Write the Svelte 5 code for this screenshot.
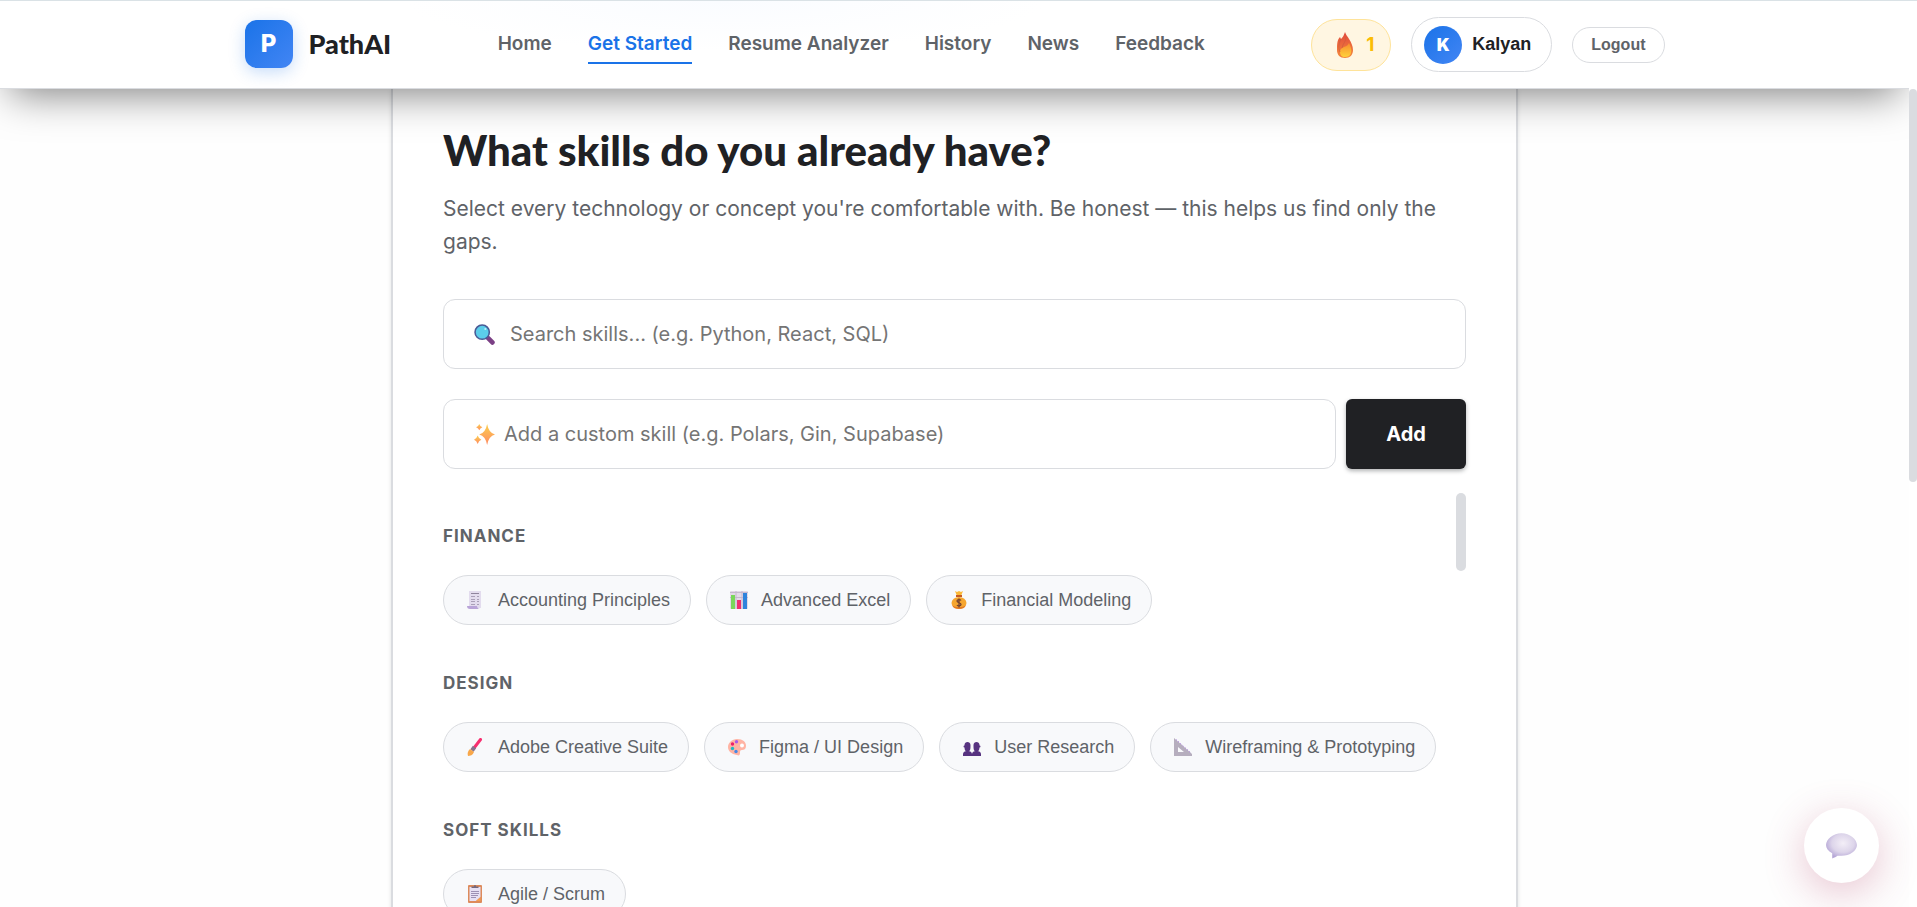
<script>
  let search = "";
  let custom = "";

  const links = [
    { name: "Home", url: "#home" },
    { name: "Get Started", url: "#start", active: true },
    { name: "Resume Analyzer", url: "#resume" },
    { name: "History", url: "#history" },
    { name: "News", url: "#news" },
    { name: "Feedback", url: "#feedback" },
  ];

  const groups = [
    {
      title: "Finance",
      skills: [
        { name: "Accounting Principles", icon: "receipt" },
        { name: "Advanced Excel", icon: "chart" },
        { name: "Financial Modeling", icon: "money" },
      ],
    },
    {
      title: "Design",
      skills: [
        { name: "Adobe Creative Suite", icon: "brush" },
        { name: "Figma / UI Design", icon: "palette" },
        { name: "User Research", icon: "users" },
        { name: "Wireframing & Prototyping", icon: "ruler" },
      ],
    },
    {
      title: "Soft Skills",
      skills: [{ name: "Agile / Scrum", icon: "clipboard" }],
    },
  ];
</script>

<div class="page">
  <div class="view">
    <header>
      <div class="bar">
        <a class="brand" href="#home">
          <span class="logo">P</span>
          <span class="name">PathAI</span>
        </a>
        <nav>
          {#each links as link}
            <a href={link.url} class:active={link.active}>{link.name}</a>
          {/each}
        </nav>
        <div class="account">
          <div class="streak">
            <svg class="flame" viewBox="0 0 18 28" aria-hidden="true">
              <defs>
                <linearGradient id="fl" x1="0" y1="0" x2="0" y2="1">
                  <stop offset="0" stop-color="#e0483c" />
                  <stop offset="1" stop-color="#f58a3c" />
                </linearGradient>
                <linearGradient id="fi" x1="0" y1="0" x2="0" y2="1">
                  <stop offset="0" stop-color="#f78b2e" />
                  <stop offset="1" stop-color="#ffd23b" />
                </linearGradient>
              </defs>
              <path
                fill="url(#fl)"
                d="M9 1c1 4 8 10 8 18 0 5-3 8-8 8s-8-3-8-8C1 14 1 9 4 6l1 2C7 6 8 4 9 1z"
              />
              <path
                fill="url(#fi)"
                d="M13 12c2 4 3 7 2 10-1 3-3 4-6 4s-5-2-5-5 2-4 4-5c3-1 4-2 5-4z"
              />
              <path fill="none" stroke="#c95a3c" stroke-opacity=".6" d="M5 8c-2 4-3 8-1 13M10 6c0 5-3 6-4 11" />
            </svg>
            <span>1</span>
          </div>
          <button class="user">
            <span class="avatar">K</span>
            Kalyan
          </button>
          <button class="logout">Logout</button>
        </div>
      </div>
    </header>

    <main>
      <section class="card">
        <h1>What skills do you already have?</h1>
        <p>
          Select every technology or concept you're comfortable with. Be honest — this helps us find
          only the gaps.
        </p>

        <label class="field">
          <svg class="glyph" viewBox="0 0 20 20" aria-hidden="true">
            <path stroke="#7b4085" stroke-width="4.500" stroke-linecap="round" d="M13.500 13.500l4 4" />
            <circle cx="7.800" cy="7.800" r="6.800" fill="#5bcdea" stroke="#4a5a96" stroke-width="1.500" />
            <circle cx="10.800" cy="4.800" r="1" fill="#c2f0fa" />
          </svg>
          <input
            type="text"
            aria-label="Search skills"
            placeholder="Search skills... (e.g. Python, React, SQL)"
            bind:value={search}
          />
        </label>

        <div class="custom">
          <label class="field tight">
            <svg class="glyph" viewBox="0 0 20 20" aria-hidden="true">
              <defs>
                <linearGradient id="sp" x1="0" y1="0" x2="0" y2="1">
                  <stop offset="0" stop-color="#fbd04e" />
                  <stop offset="1" stop-color="#ff8a62" />
                </linearGradient>
              </defs>
              <g fill="url(#sp)">
                <path d="M12.500 0Q14 8.500 20 10q-6 1.500-7.500 10Q11 11.500 5 10q6-1.500 7.500-10z" />
                <path d="M5 0Q5.700 2.300 8 3 5.700 3.700 5 6 4.300 3.700 2 3 4.300 2.300 5 0z" />
                <path d="M3.500 11q1 3 3.500 4-2.500 1-3.500 4-1-3-3.500-4 2.500-1 3.500-4z" />
              </g>
            </svg>
            <input
              type="text"
              aria-label="Custom skill"
              placeholder="Add a custom skill (e.g. Polars, Gin, Supabase)"
              bind:value={custom}
            />
          </label>
          <button class="add">Add</button>
        </div>

        <div class="skills">
          <div class="groups">
            {#each groups as group}
              <h2>{group.title}</h2>
              <div class="chips">
                {#each group.skills as skill}
                  <button class="chip">
                    <svg viewBox="0 0 18 18" aria-hidden="true">
                      {#if skill.icon === "receipt"}
                        <path fill="#e3dcee" d="M2 0h12v17H2z" />
                        <path fill="#b9a4d8" d="M0 15h10c0 1.500 1 3 3 3H3c-2 0-3-1-3-3z" />
                        <path fill="none" stroke="#8f849c" d="M4 2.500h8" />
                        <path
                          fill="none"
                          stroke="#aaa0b8"
                          d="M4 5.500h4m2 0h2M4 8.500h4m2 0h2M4 10.500h4m2 0h2M4 13.500h4m2 0h2"
                        />
                      {:else if skill.icon === "chart"}
                        <rect width="18" height="18" rx="1" fill="#e3dae8" />
                        <path fill="none" stroke="#c5b8ce" d="M0 1.500h18M0 6.500h18M6 0v18M12 0v18" />
                        <path fill="#79d65b" d="M1 4h4v14H1z" />
                        <path fill="#ef2e70" d="M7 9h4v9H7z" />
                        <path fill="#2f83dc" d="M13 2h4v16h-4z" />
                      {:else if skill.icon === "money"}
                        <path fill="#fbb938" d="M5 0l2 1 2-1 2 1 2-1-2 5H7z" />
                        <path fill="#c55b25" d="M6 4h6v2H6z" />
                        <ellipse cx="9" cy="12" rx="7.500" ry="6" fill="#f6a62f" />
                        <path fill="#e47a22" d="M2 14c3 3 11 3 14 0-1 3-4 4-7 4s-6-1-7-4z" />
                        <path
                          fill="none"
                          stroke="#74412f"
                          stroke-width="1.300"
                          d="M11 9.500C10 8 7 8.500 7 10c0 2 4 1.500 4 3.500 0 1.500-3 2-4 .5M9 7.500v9"
                        />
                      {:else if skill.icon === "brush"}
                        <path stroke="#f82f70" stroke-width="3" stroke-linecap="round" d="M13.500 1.500L7 10" />
                        <path stroke="#85738e" stroke-width="4" d="M7.500 9L5 12.500" />
                        <path fill="#f8a74a" d="M3 11l4 3c-1 3-4 4-6 4-1-3 0-5 2-7z" />
                      {:else if skill.icon === "palette"}
                        <path
                          fill="#ffb4a4"
                          d="M9 1c6 0 9 3 9 7 0 3-2 4-4 4s-2 1-2 3-1 3-3 2c-6-1-9-4-9-8s4-8 9-8z"
                        />
                        <circle cx="14" cy="7.500" r="2" fill="#fff" />
                        <circle cx="8.500" cy="3.800" r="1.700" fill="#a95be8" />
                        <circle cx="4.500" cy="6" r="1.700" fill="#ec1f69" />
                        <circle cx="4.500" cy="10.500" r="1.700" fill="#20b8c4" />
                        <circle cx="8" cy="13.500" r="1.700" fill="#4689e6" />
                      {:else if skill.icon === "users"}
                        <g fill="#573380">
                          <path d="M0 18v-2c0-2 2-3 4-3h1c2 0 4 1 4 3v2zM9 18v-2c0-2 2-3 4-3h1c2 0 4 1 4 3v2z" />
                          <path d="M1.500 7c0-4 6-4 6 0s0 6-3 7c-3-1-3-3-3-7zM10.500 7c0-4 6-4 6 0s0 6-3 7c-3-1-3-3-3-7z" />
                          <circle cx="1.500" cy="8.500" r="1" />
                          <circle cx="16.500" cy="8.500" r="1" />
                        </g>
                      {:else if skill.icon === "ruler"}
                        <path fill="#b6aebe" fill-rule="evenodd" d="M0 0l18 16v2H0zM4 9v5h6z" />
                        <path stroke="#9d67dc" stroke-dasharray="1 2" d="M2 1.500L17 15" />
                      {:else}
                        <rect x="1" width="14" height="18" rx="1" fill="#dd8b5c" />
                        <path fill="#e6e0f4" d="M2.500 2h11v10L9 16H2.500z" />
                        <path fill="#f5a050" d="M13.500 12v4H9z" />
                        <path fill="#74697e" d="M4.500 3V1.500H7C7-.5 9-.5 9 1.500h2.500V3z" />
                        <path fill="none" stroke="#9c90b4" d="M4 6.500h8M4 8.500h8M4 10.500h7M4 12.500h5" />
                      {/if}
                    </svg>
                    {skill.name}
                  </button>
                {/each}
              </div>
            {/each}
          </div>
          <div class="thumb"></div>
        </div>
      </section>
    </main>
  </div>
  <div class="rail">
    <div class="rail-thumb"></div>
  </div>

  <button class="chat" aria-label="Open chat">
    <svg viewBox="0 0 32 26" aria-hidden="true">
      <defs>
        <radialGradient id="bub" cx=".55" cy=".4" r=".6">
          <stop offset="0" stop-color="#f3eef7" />
          <stop offset=".6" stop-color="#ddd5ea" />
          <stop offset="1" stop-color="#b5a6d6" />
        </radialGradient>
      </defs>
      <path
        fill="url(#bub)"
        d="M16 1c8 0 15 6 15 11.500S24 23 16 23c-1.500 0-3 0-4 0-1 1-3 2-5 2.500V20.500C3 18.500 1 15.500 1 12.500 1 7 8 1 16 1z"
      />
    </svg>
  </button>
</div>

<style>
  :global(body) {
    margin: 0;
    background: #fefefe;
  }

  * {
    box-sizing: border-box;
  }

  .page {
    display: flex;
    height: 100vh;
    overflow: hidden;
    border-top: 1px solid #dae2e6;
    font-family: Inter, sans-serif;
    color: #202124;
  }

  .view {
    flex: 1;
    min-width: 0;
    overflow: hidden;
  }

  button {
    font-family: "Liberation Sans", Arial, sans-serif;
    cursor: pointer;
  }

  /* top navigation */

  header {
    position: relative;
    z-index: 1;
    border-bottom: 1px solid #dadce0;
    background: radial-gradient(ellipse 320px 50px at 38% 0, #fafcff, #ffffff);
    box-shadow: 0 15px 40px -10px rgba(0, 0, 0, 0.5);
  }

  .bar {
    display: flex;
    align-items: center;
    justify-content: space-between;
    max-width: 1420px;
    height: 87px;
    margin: 0 auto;
  }

  .brand {
    display: flex;
    align-items: center;
    gap: 16px;
    padding-bottom: 2px;
    color: inherit;
    text-decoration: none;
  }

  .logo {
    display: grid;
    place-items: center;
    width: 48px;
    height: 48px;
    border-radius: 12px;
    background: linear-gradient(135deg, #1a73e8, #4285f4);
    box-shadow: 0 4px 16px rgba(26, 115, 232, 0.25);
    color: white;
    font-size: 24px;
    font-weight: 800;
  }

  .name {
    font-family: Lato, sans-serif;
    font-size: 27px;
    font-weight: 900;
  }

  nav {
    display: flex;
    gap: 36px;
  }

  nav a {
    padding: 6px 0;
    border-bottom: 2px solid transparent;
    color: #5f6368;
    font-size: 19px;
    font-weight: 600;
    line-height: 24px;
    text-decoration: none;
  }

  nav a.active {
    border-color: #1a73e8;
    color: #1a73e8;
  }

  .account {
    display: flex;
    align-items: center;
    gap: 20px;
  }

  .streak {
    display: flex;
    align-items: center;
    justify-content: center;
    gap: 12px;
    width: 80px;
    height: 52px;
    padding-left: 8px;
    border: 1px solid #fee39a;
    border-radius: 26px;
    background: #fff6e2;
    color: #fbbc04;
    font-size: 19px;
    font-weight: 700;
  }

  .flame {
    width: 18px;
    height: 28px;
  }

  .user {
    display: flex;
    align-items: center;
    gap: 10px;
    height: 55px;
    padding: 0 20px 0 12px;
    border: 1px solid #dadce0;
    border-radius: 28px;
    background: white;
    color: #202124;
    font-size: 18px;
    font-weight: 700;
  }

  .avatar {
    display: grid;
    place-items: center;
    width: 38px;
    height: 38px;
    border-radius: 50%;
    background: linear-gradient(135deg, #1a73e8, #4285f4);
    color: white;
    font-family: Inter, sans-serif;
    font-size: 17px;
    font-weight: 900;
  }

  .logout {
    height: 36px;
    padding: 0 18px;
    border: 1px solid #dadce0;
    border-radius: 18px;
    background: white;
    color: #5f6368;
    font-size: 16px;
    font-weight: 700;
  }

  /* skill picker */

  .card {
    max-width: 1127px;
    margin: 0 auto;
    padding: 33px 50px;
    border: solid #dadce0;
    border-width: 0 2px;
    background: white;
    box-shadow: 0 1px 4px rgba(60, 64, 67, 0.15);
  }

  h1 {
    margin: 0 0 14px;
    font-family: Lato, sans-serif;
    font-size: 42px;
    font-weight: 900;
    line-height: 56px;
  }

  p {
    margin: 0 0 41px;
    color: #5f6368;
    font-size: 21px;
    line-height: 33px;
  }

  .field {
    display: flex;
    flex: 1;
    align-items: center;
    gap: 15px;
    height: 70px;
    padding: 0 30px;
    border: 1px solid #dadce0;
    border-radius: 12px;
    background: white;
  }

  .field.tight {
    gap: 9px;
  }

  .glyph {
    flex: none;
    width: 21px;
    height: 21px;
  }

  input {
    flex: 1;
    min-width: 0;
    padding: 0;
    border: 0;
    outline: 0;
    background: none;
    font-family: Inter, sans-serif;
    font-size: 20px;
  }

  input::placeholder {
    color: #757575;
  }

  .custom {
    display: flex;
    gap: 10px;
    margin: 30px 0 24px;
  }

  .add {
    width: 120px;
    border: 0;
    border-radius: 6px;
    background: #202124;
    box-shadow: 0 2px 4px rgba(60, 64, 67, 0.4);
    color: white;
    font-family: Inter, sans-serif;
    font-size: 20px;
    font-weight: 700;
  }

  .skills {
    display: flex;
    align-items: flex-start;
  }

  .groups {
    flex: 1;
    padding-top: 30px;
  }

  .thumb {
    width: 10px;
    height: 78px;
    border-radius: 5px;
    background: #dadce0;
  }

  h2 {
    margin: 0 0 26px;
    color: #5f6368;
    font-size: 17px;
    font-weight: 700;
    letter-spacing: 1px;
    line-height: 26px;
    text-transform: uppercase;
  }

  .chips {
    display: flex;
    flex-wrap: wrap;
    gap: 15px;
    margin-bottom: 45px;
  }

  .chip {
    display: flex;
    align-items: center;
    gap: 13px;
    height: 50px;
    padding: 0 20px 0 23px;
    border: 1px solid #dadce0;
    border-radius: 25px;
    background: #f8f9fb;
    color: #5f6368;
    font-size: 18px;
  }

  .chip svg {
    width: 18px;
    height: 18px;
  }

  /* page scrollbar */

  .rail {
    width: 8px;
    padding-top: 88px;
    background: white;
  }

  .rail-thumb {
    height: 393px;
    border-radius: 4px;
    background: #dadce0;
  }

  .chat {
    position: fixed;
    right: 38px;
    bottom: 24px;
    z-index: 2;
    display: grid;
    place-items: center;
    width: 75px;
    height: 75px;
    padding: 0;
    border: 0;
    border-radius: 50%;
    background: white;
    box-shadow: 0 10px 40px rgba(180, 60, 100, 0.3);
  }

  .chat svg {
    width: 33px;
    height: 27px;
  }
</style>
